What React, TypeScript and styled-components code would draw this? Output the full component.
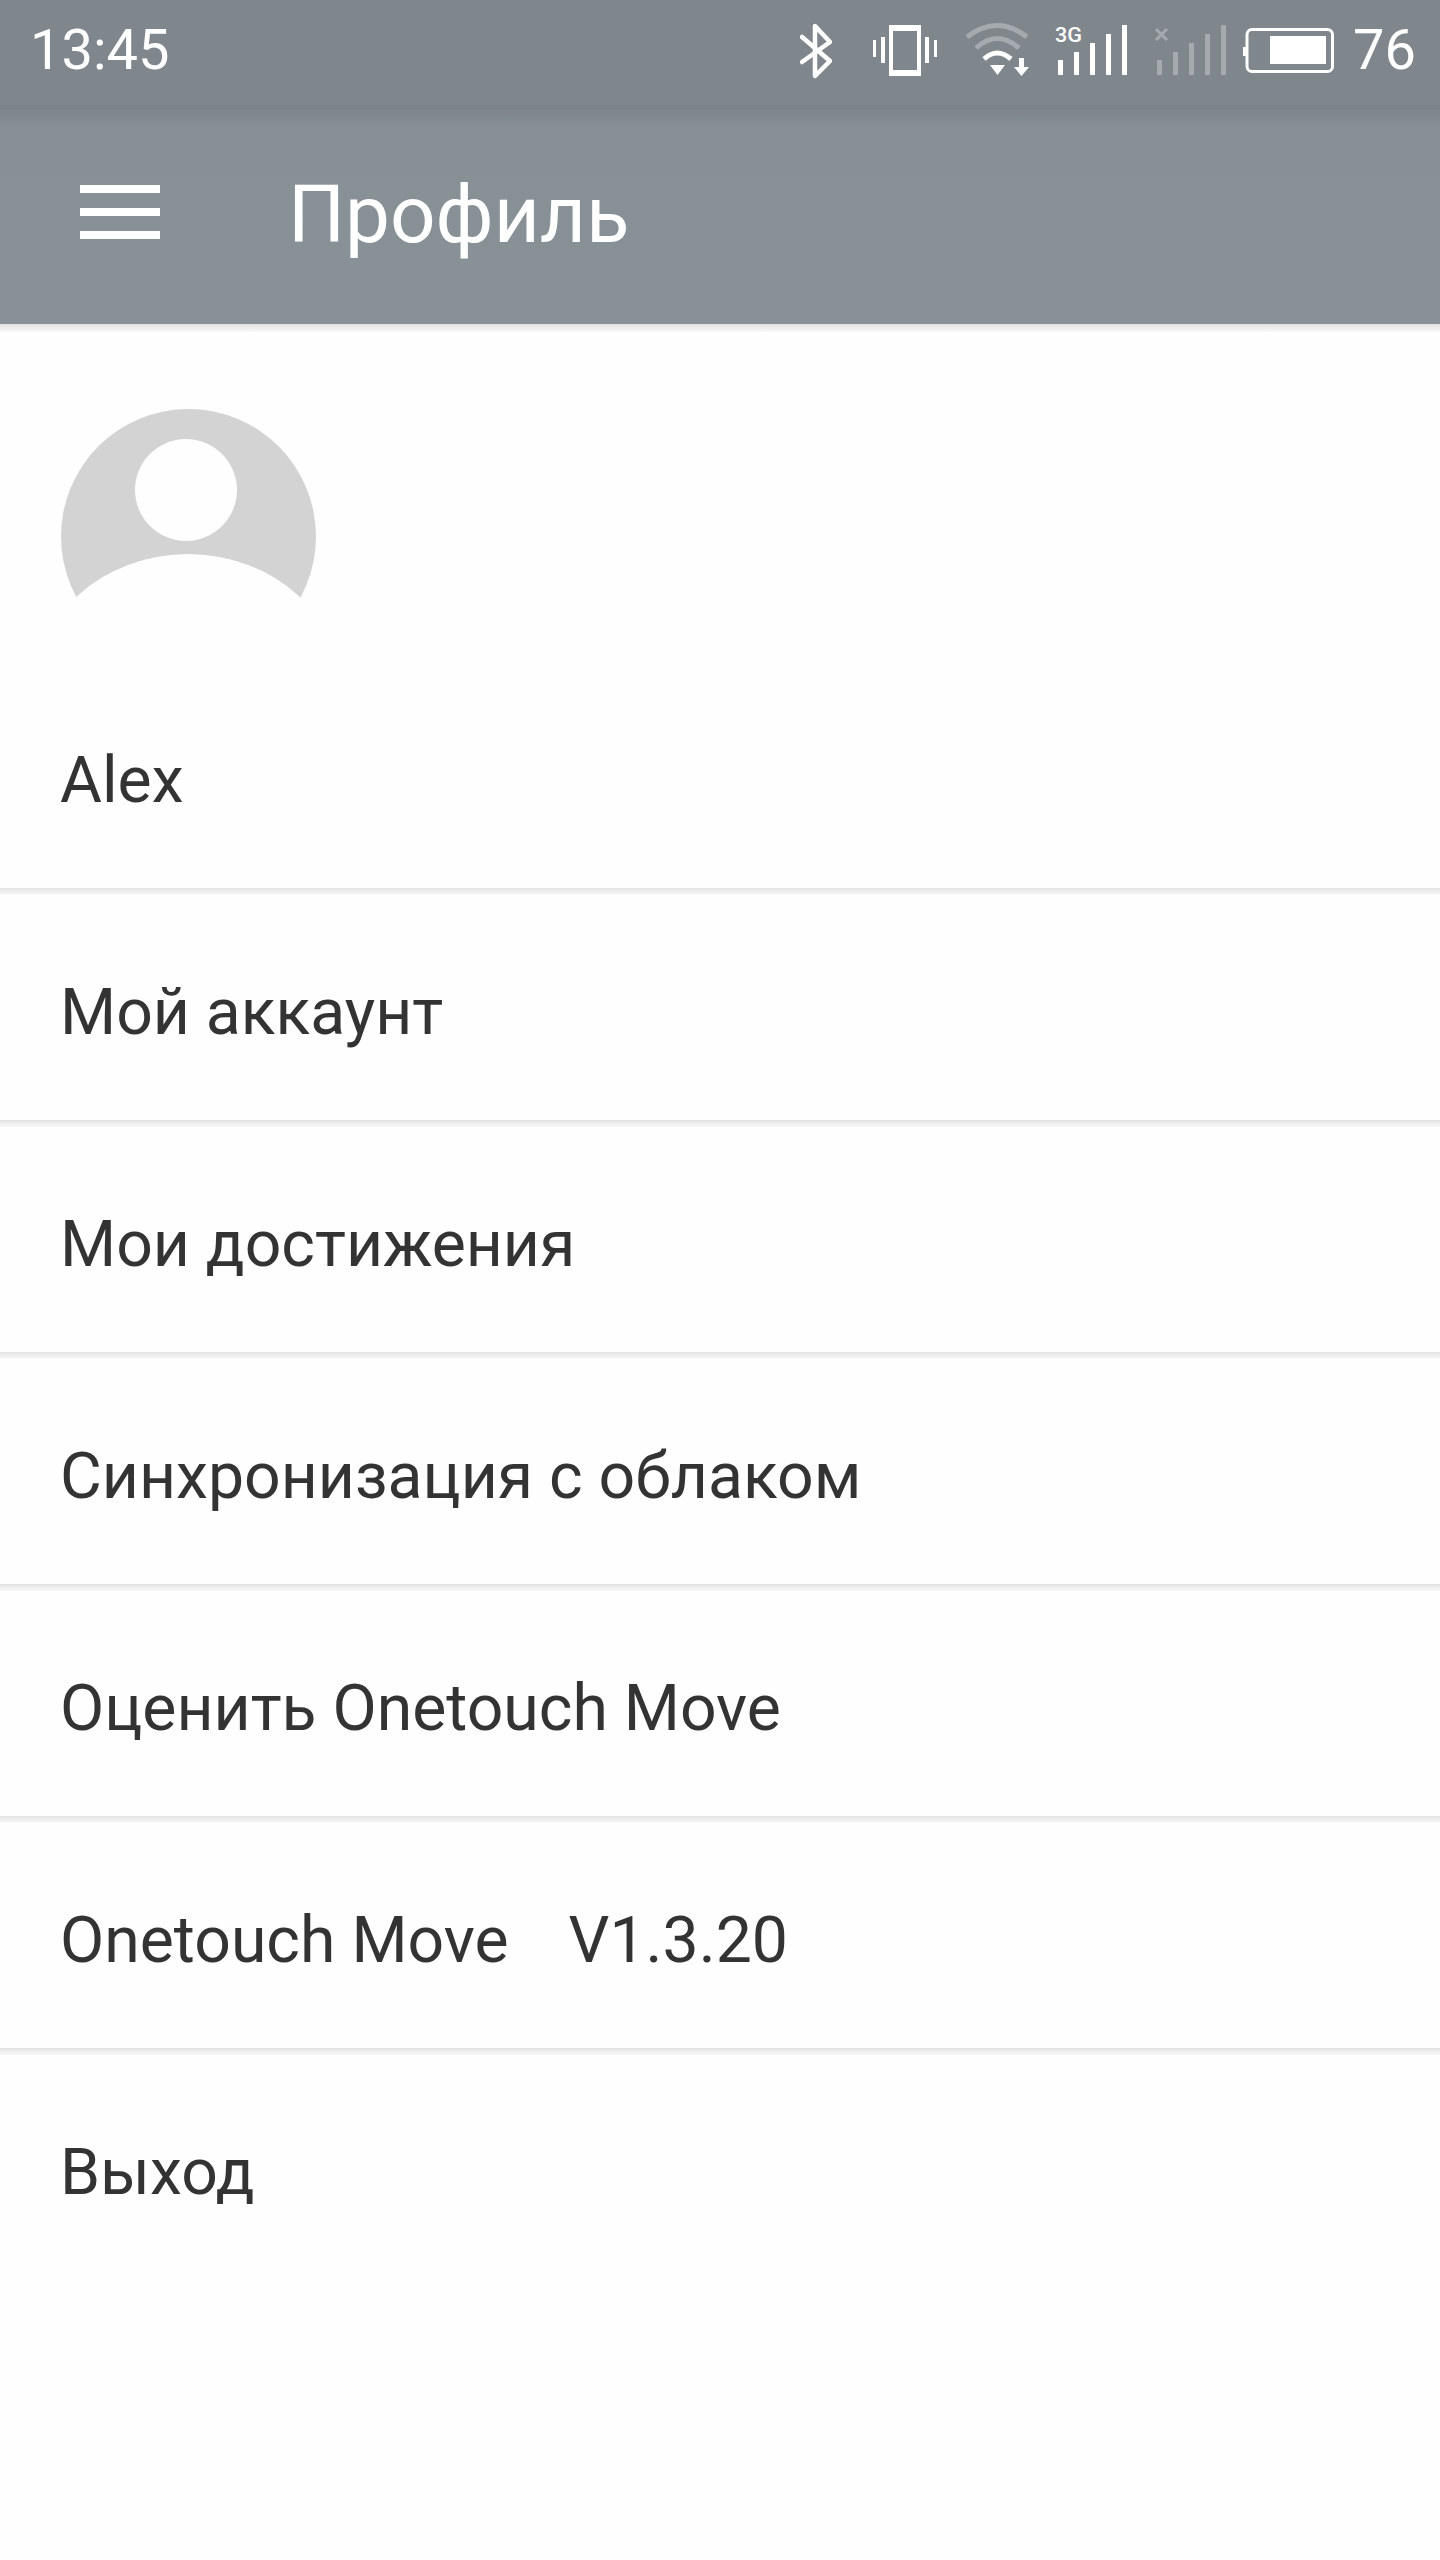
import React from "react";
import styled, { createGlobalStyle } from "styled-components";

const GlobalStyle = createGlobalStyle`
  html, body {
    margin: 0;
    padding: 0;
    background: #fefefe;
  }
`;

const Page = styled.div`
  width: 1440px;
  height: 2560px;
  overflow: hidden;
  display: flex;
  flex-direction: column;
  background: #fefefe;
  font-family: Roboto, "Noto Sans", sans-serif;
`;

const StatusBar = styled.div`
  height: 105px;
  flex: none;
  display: flex;
  align-items: center;
  justify-content: space-between;
  padding: 0 24px 5px 30px;
  box-sizing: border-box;
  background: #7f868c;
  color: #fff;
`;

const StatusText = styled.span`
  font-size: 56px;
  font-weight: 400;
  line-height: 60px;
`;

const StatusIcons = styled.div`
  display: flex;
  align-items: center;
`;

const StatusIcon = styled.svg<{ $left: number }>`
  display: block;
  height: 60px;
  margin-left: ${(p) => p.$left}px;
  flex: none;
`;

const Percent = styled(StatusText)`
  margin-left: 19px;
`;

const Toolbar = styled.header`
  height: 219px;
  flex: none;
  display: flex;
  align-items: center;
  padding-left: 80px;
  box-sizing: border-box;
  background: linear-gradient(#7b8288 0, #869095 22px, #879196 100%);
  color: #fff;
`;

const ToolbarShadow = styled.div`
  height: 8px;
  flex: none;
  background: linear-gradient(#e0e0e0, #fafafa);
`;

const MenuButton = styled.div`
  width: 80px;
  height: 54px;
  display: flex;
  flex-direction: column;
  justify-content: space-between;
  margin: 0 128px 6px 0;
`;

const MenuBar = styled.span`
  display: block;
  height: 8px;
  background: #fff;
`;

const Title = styled.h1`
  margin: 0;
  font-size: 80px;
  font-weight: 400;
  line-height: 90px;
`;

const AvatarWrap = styled.div`
  padding: 77px 0 0 61px;
`;

const Avatar = styled.svg`
  display: block;
  width: 255px;
  height: 255px;
`;

const Row = styled.div<{ $height: number }>`
  height: ${(p) => p.$height}px;
  box-sizing: border-box;
  display: flex;
  align-items: center;
  padding: 8px 0 0 60px;
  font-size: 64.3px;
  color: #333333;
  white-space: pre;
`;

const Version = styled.span`
  margin-left: 60px;
`;

const RowLine = styled.div`
  height: 7px;
  background: linear-gradient(#e2e2e2, #f9f9f9);
`;

const rows = [
  { label: "Мой аккаунт" },
  { label: "Мои достижения" },
  { label: "Синхронизация с облаком" },
  { label: "Оценить Onetouch Move" },
  { label: "Onetouch Move", version: "V1.3.20" },
  { label: "Выход" },
];

const SignalBars = ({ dim }: { dim?: boolean }) => (
  <g fill="#fff" opacity={dim ? 0.3 : 1}>
    <rect x="3" y="40" width="5" height="15" />
    <rect x="19" y="32" width="5" height="23" />
    <rect x="35" y="23" width="5" height="32" />
    <rect x="51" y="14" width="5" height="41" />
    <rect x="67" y="5" width="5" height="50" />
  </g>
);

export default function App() {
  return (
    <Page>
      <GlobalStyle />
      <StatusBar>
        <StatusText>13:45</StatusText>
        <StatusIcons>
          <StatusIcon $left={0} width="32" viewBox="0 0 32 60" fill="none" stroke="#fff" strokeWidth="4.500" strokeLinecap="round" strokeLinejoin="round">
            <path d="M2 17 30 41 15 56V6L30 22 2 42" />
          </StatusIcon>
          <StatusIcon $left={41} width="64" viewBox="0 0 64 60" fill="#fff">
            <path fillRule="evenodd" d="M16 5H48V56H16ZM20 11V50H44V11Z" />
            <rect x="0" y="20" width="3" height="17" />
            <rect x="8" y="17" width="4" height="26" />
            <rect x="52" y="17" width="4" height="26" />
            <rect x="61" y="20" width="3" height="17" />
          </StatusIcon>
          <StatusIcon $left={29} width="63" viewBox="0 0 63 60" fill="none">
            <path d="M1 17Q31 -6 61 17" stroke="#fff" strokeOpacity="0.3" strokeWidth="5" />
            <path d="M10 28Q31 9 53 28" stroke="#fff" strokeOpacity="0.3" strokeWidth="5" />
            <path d="M18 39Q31 27 45 39" stroke="#fff" strokeWidth="5" />
            <path d="M24 45H39L31.500 55Z" fill="#fff" />
            <path d="M53 38H58V47H63L55.500 56 48 47H53Z" fill="#fff" />
          </StatusIcon>
          <StatusIcon $left={26} width="73" viewBox="0 0 73 60">
            <text x="0" y="22" fontFamily="Roboto, sans-serif" fontSize="21" fontWeight="500" fill="#fff" textLength="27" lengthAdjust="spacingAndGlyphs">3G</text>
            <SignalBars />
          </StatusIcon>
          <StatusIcon $left={26} width="73" viewBox="0 0 73 60">
            <path d="M2 9 13 20M13 9 2 20" stroke="#fff" strokeOpacity="0.3" strokeWidth="3" />
            <SignalBars dim />
          </StatusIcon>
          <StatusIcon $left={16} width="91" viewBox="0 0 91 60">
            <rect x="4" y="9.500" width="85.500" height="42" rx="5" fill="none" stroke="#fff" strokeWidth="3" />
            <rect x="0" y="27" width="3" height="9" fill="#fff" />
            <rect x="27" y="16" width="56" height="28" fill="#fff" />
          </StatusIcon>
          <Percent>76</Percent>
        </StatusIcons>
      </StatusBar>
      <Toolbar>
        <MenuButton>
          <MenuBar />
          <MenuBar />
          <MenuBar />
        </MenuButton>
        <Title>Профиль</Title>
      </Toolbar>
      <ToolbarShadow />
      <AvatarWrap>
        <Avatar viewBox="0 0 255 255">
          <circle cx="127.500" cy="127.500" r="127.500" fill="#d3d3d3" />
          <circle cx="125" cy="81" r="51" fill="#fefefe" />
          <ellipse cx="127" cy="285" rx="155" ry="140" fill="#fefefe" />
        </Avatar>
      </AvatarWrap>
      <Row $height={224}>Alex</Row>
      <RowLine />
      {rows.map((row, i) => (
        <React.Fragment key={row.label}>
          <Row $height={225}>
            {row.label}
            {row.version && <Version>{row.version}</Version>}
          </Row>
          {i < rows.length - 1 && <RowLine />}
        </React.Fragment>
      ))}
    </Page>
  );
}
